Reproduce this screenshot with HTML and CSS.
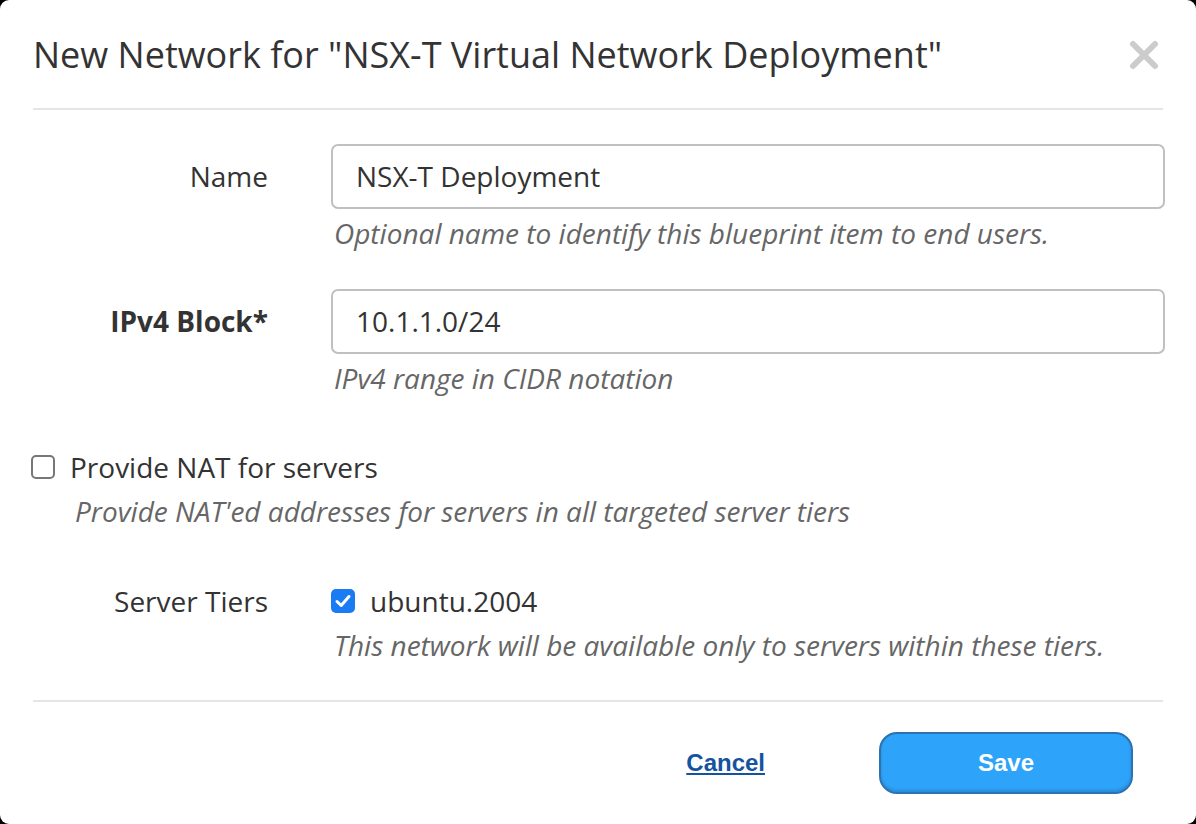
FILE: index.html
```html
<!DOCTYPE html>
<html>
<head>
<meta charset="utf-8">
<link rel="stylesheet" href="styles.css">
</head>
<body>
<div class="dialog">
  <div class="header">
    <h1 class="title">New Network for "NSX-T Virtual Network Deployment"</h1>
    <button class="close" aria-label="Close">
      <svg width="30" height="30" viewBox="0 0 30 30"><path d="M4 4 L26 26 M26 4 L4 26" stroke="#cccccc" stroke-width="6" stroke-linecap="round"/></svg>
    </button>
  </div>
  <div class="body">
    <div class="row row-name">
      <label class="label">Name</label>
      <div class="field">
        <div class="input">NSX-T Deployment</div>
        <div class="help">Optional name to identify this blueprint item to end users.</div>
      </div>
    </div>
    <div class="row row-ip">
      <label class="label bold">IPv4 Block*</label>
      <div class="field">
        <div class="input">10.1.1.0/24</div>
        <div class="help">IPv4 range in CIDR notation</div>
      </div>
    </div>
    <div class="nat">
      <div class="check-line">
        <span class="checkbox"></span>
        <span class="check-text">Provide NAT for servers</span>
      </div>
      <div class="help nat-help">Provide NAT'ed addresses for servers in all targeted server tiers</div>
    </div>
    <div class="row row-tiers">
      <label class="label">Server Tiers</label>
      <div class="field">
        <div class="check-line">
          <span class="checkbox checked">
            <svg width="24" height="24" viewBox="0 0 24 24"><path d="M6 12.5 L10.2 16.5 L18 7.5" stroke="#fff" stroke-width="3" fill="none" stroke-linecap="round" stroke-linejoin="round"/></svg>
          </span>
          <span class="check-text">ubuntu.2004</span>
        </div>
        <div class="help">This network will be available only to servers within these tiers.</div>
      </div>
    </div>
  </div>
  <div class="footer">
    <a class="cancel" href="#">Cancel</a>
    <button class="save">Save</button>
  </div>
</div>
</body>
</html>
```
FILE: styles.css
```css
html, body {
  margin: 0;
  padding: 0;
  background: #000;
}
body {
  width: 1196px;
  height: 824px;
  overflow: hidden;
  font-family: "Open Sans", "Liberation Sans", sans-serif;
  color: #333;
}
.dialog {
  width: 1196px;
  height: 824px;
  background: #fff;
  border-radius: 9px;
  box-sizing: border-box;
  padding: 0 33px;
  display: flex;
  flex-direction: column;
}
.header {
  height: 108px;
  border-bottom: 2px solid #e5e5e5;
  display: flex;
  align-items: center;
  justify-content: space-between;
}
.title {
  margin: 0;
  font-weight: 400;
  font-size: 36px;
  color: #333;
  line-height: 44px;
  padding-top: 2px;
}
.close {
  background: none;
  border: 0;
  padding: 0;
  margin-right: 4px;
  margin-top: 1px;
  width: 30px;
  height: 30px;
}
.close svg { display: block; }
.body {
  flex: 1;
  border-bottom: 2px solid #e5e5e5;
  padding-top: 34px;
}
.row {
  display: grid;
  grid-template-columns: 235px 1fr;
  column-gap: 63px;
  margin-right: -2px;
}
.label {
  text-align: right;
  font-size: 28px;
  line-height: 65px;
  color: #333;
}
.label.bold { font-weight: 700; }
.input {
  height: 65px;
  box-sizing: border-box;
  border: 2px solid #c0c0c0;
  border-radius: 7px;
  padding: 0 23px;
  font-size: 28px;
  line-height: 61px;
  color: #333;
}
.help {
  font-style: italic;
  color: #666;
  font-size: 28px;
  line-height: 36px;
  margin-top: 6px;
  padding-left: 3px;
}
.row-ip { margin-top: 38px; }
.nat { margin-top: 53px; }
.check-line {
  display: flex;
  align-items: center;
  gap: 15px;
  height: 36px;
}
.checkbox {
  width: 24px;
  height: 24px;
  box-sizing: border-box;
  border: 2px solid #777;
  border-radius: 5px;
  flex: none;
  margin-left: -2px;
}
.checkbox.checked {
  border: 0;
  background: #1a7cf4;
  margin-left: 0;
}
.checkbox svg { display: block; }
.check-text {
  font-size: 28px;
  line-height: 36px;
  color: #333;
}
.nat-help {
  margin-top: 8px;
  padding-left: 42px;
}
.row-tiers {
  margin-top: 54px;
}
.row-tiers .label { line-height: 36px; }
.row-tiers .help { margin-top: 8px; }
.footer {
  height: 122px;
  display: flex;
  align-items: center;
  justify-content: flex-end;
  padding-right: 30px;
  padding-bottom: 0;
}
.cancel {
  font-family: "Liberation Sans", Arial, sans-serif;
  font-weight: 700;
  font-size: 24px;
  color: #1553a0;
  text-decoration: underline;
  margin-right: 114px;
}
.save {
  width: 254px;
  height: 62px;
  border-radius: 18px;
  background: #2ea3fa;
  border: 2px solid #2b73b0;
  box-shadow: inset 0 -2px 3px rgba(0,0,0,0.15);
  color: #fff;
  font-family: "Liberation Sans", Arial, sans-serif;
  font-weight: 700;
  font-size: 24px;
  padding: 0;
}
```
